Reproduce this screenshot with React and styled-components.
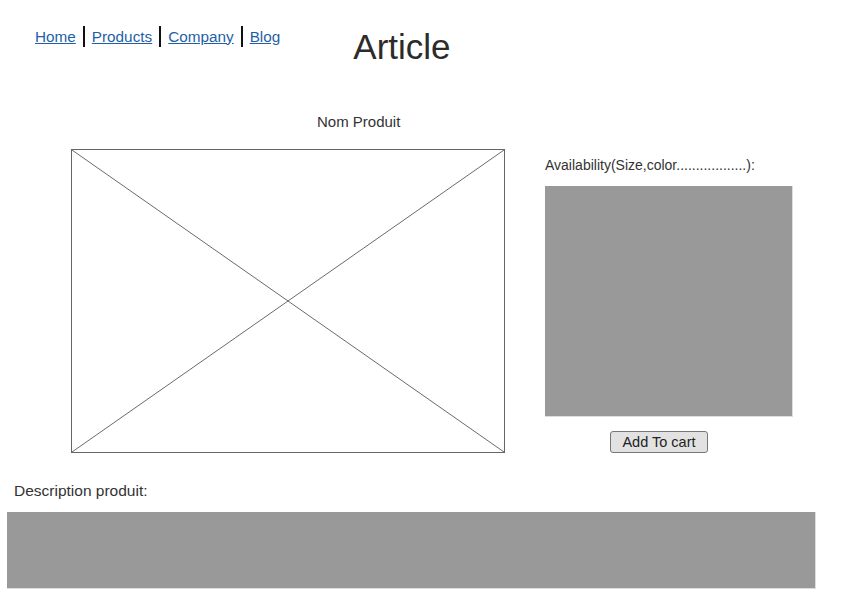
import React from 'react';
import styled, { createGlobalStyle } from 'styled-components';

const GlobalStyle = createGlobalStyle`
  body {
    margin: 0;
    background: #fff;
    font-family: "Liberation Sans", Arial, sans-serif;
    color: #333;
  }
`;

const Page = styled.div`
  width: 861px;
  height: 607px;
  overflow: hidden;
`;

const Header = styled.header`
  display: flex;
  align-items: flex-start;
  padding: 26px 0 0 35px;
`;

const Nav = styled.nav`
  display: flex;
  align-items: center;
`;

const NavLink = styled.a`
  color: #1f5fa8;
  font-size: 15.3px;
  text-decoration: underline;
  line-height: 20px;
`;

const Sep = styled.span`
  width: 2px;
  height: 21px;
  background: #111;
  margin: 0 7px;
`;

const Title = styled.h1`
  margin: 1px 0 0 73px;
  font-size: 35px;
  font-weight: normal;
  line-height: 40px;
  color: #2b2b2b;
`;

const ProductName = styled.div`
  margin: 47px 0 0 317px;
  font-size: 15px;
  line-height: 16px;
`;

const Main = styled.section`
  display: flex;
  align-items: flex-start;
  margin-top: 19px;
  padding-left: 71px;
  gap: 40px;
`;

const ImageBox = styled.div`
  width: 432px;
  height: 302px;
  border: 1px solid #666;
  svg {
    display: block;
  }
`;

const Side = styled.div`
  display: flex;
  flex-direction: column;
  padding-top: 8px;
`;

const Label = styled.div`
  font-size: 14px;
  line-height: 17px;
  margin-bottom: 12px;
`;

const GrayBox = styled.div`
  width: ${(p) => p.$w}px;
  height: ${(p) => p.$h}px;
  background: #999;
  border-right: 1px solid #ddd;
  border-bottom: 1px solid #ddd;
`;

const CartButton = styled.button`
  align-self: flex-start;
  margin: 14px 0 0 65px;
  width: 98px;
  height: 22px;
  padding: 0;
  font-family: "Liberation Sans", Arial, sans-serif;
  font-size: 14.5px;
  color: #222;
  background: #e2e2e2;
  border: 1px solid #777;
  border-radius: 3px;
`;

const Description = styled.div`
  margin: 30px 0 0 14px;
  font-size: 15.5px;
  line-height: 16px;
`;

const DescBlock = styled.div`
  margin: 13px 0 0 7px;
`;

function Placeholder() {
  return (
    <svg width="432" height="302" viewBox="0 0 432 302">
      <line x1="0" y1="0" x2="432" y2="302" stroke="#444" strokeWidth="0.8" />
      <line x1="432" y1="0" x2="0" y2="302" stroke="#444" strokeWidth="0.8" />
    </svg>
  );
}

export default function App() {
  return (
    <Page>
      <GlobalStyle />
      <Header>
        <Nav>
          <NavLink href="#">Home</NavLink>
          <Sep />
          <NavLink href="#">Products</NavLink>
          <Sep />
          <NavLink href="#">Company</NavLink>
          <Sep />
          <NavLink href="#">Blog</NavLink>
        </Nav>
        <Title>Article</Title>
      </Header>
      <ProductName>Nom Produit</ProductName>
      <Main>
        <ImageBox>
          <Placeholder />
        </ImageBox>
        <Side>
          <Label>Availability(Size,color..................):</Label>
          <GrayBox $w={247} $h={230} />
          <CartButton>Add To cart</CartButton>
        </Side>
      </Main>
      <Description>Description produit:</Description>
      <DescBlock>
        <GrayBox $w={808} $h={76} />
      </DescBlock>
    </Page>
  );
}
